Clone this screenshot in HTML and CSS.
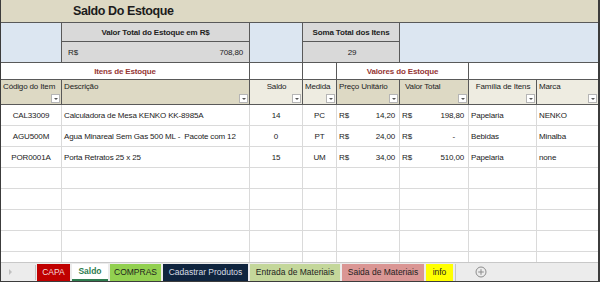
FILE: index.html
```html
<!DOCTYPE html>
<html lang="pt">
<head>
    <meta charset="UTF-8">
    <title>Saldo Do Estoque</title>
    <link rel="stylesheet" href="styles.css">
</head>
<body>
<div class="window">
    <!-- Planilha -->
    <div class="sheet">
        <table class="grid">
            <colgroup>
                <col class="c-cod"><col class="c-desc"><col class="c-saldo"><col class="c-med">
                <col class="c-preco"><col class="c-valor"><col class="c-fam"><col class="c-marca">
            </colgroup>
            <tr>
                <td colspan="8" class="title">Saldo Do Estoque</td>
            </tr>
            <tr>
                <td rowspan="2" class="blue"></td>
                <td class="sum-head">Valor Total do Estoque em R$</td>
                <td rowspan="2" class="blue"></td>
                <td colspan="2" class="sum-head">Soma Total dos Itens</td>
                <td colspan="3" rowspan="2" class="blue last"></td>
            </tr>
            <tr>
                <td class="sum-val"><div class="money"><span>R$</span><span>708,80</span></div></td>
                <td colspan="2" class="sum-val center">29</td>
            </tr>
            <tr>
                <td colspan="2" class="group">Itens de Estoque</td>
                <td class="group"></td>
                <td class="group"></td>
                <td colspan="2" class="group">Valores do Estoque</td>
                <td colspan="2" class="group last"></td>
            </tr>
            <tr>
                <td class="head tan"><div class="hd">Código do Item<i class="filter"></i></div></td>
                <td class="head tan"><div class="hd">Descrição<i class="filter"></i></div></td>
                <td class="head light"><div class="hd center">Saldo<i class="filter"></i></div></td>
                <td class="head light"><div class="hd">Medida<i class="filter"></i></div></td>
                <td class="head tan"><div class="hd">Preço Unitário<i class="filter"></i></div></td>
                <td class="head tan"><div class="hd pad">Valor Total<i class="filter"></i></div></td>
                <td class="head light"><div class="hd center">Família de Itens<i class="filter"></i></div></td>
                <td class="head light last"><div class="hd">Marca<i class="filter"></i></div></td>
            </tr>
            <tr>
                <td class="center">CAL33009</td>
                <td>Calculadora de Mesa KENKO KK-8985A</td>
                <td class="center">14</td>
                <td class="center">PC</td>
                <td><div class="money"><span>R$</span><span>14,20</span></div></td>
                <td><div class="money"><span>R$</span><span>198,80</span></div></td>
                <td>Papelaria</td>
                <td class="last">NENKO</td>
            </tr>
            <tr>
                <td class="center">AGU500M</td>
                <td>Agua Minareal Sem Gas 500 ML -&nbsp; Pacote com 12</td>
                <td class="center">0</td>
                <td class="center">PT</td>
                <td><div class="money"><span>R$</span><span>24,00</span></div></td>
                <td><div class="money"><span>R$</span><span class="dash">-</span></div></td>
                <td>Bebidas</td>
                <td class="last">Minalba</td>
            </tr>
            <tr>
                <td class="center">POR0001A</td>
                <td>Porta Retratos 25 x 25</td>
                <td class="center">15</td>
                <td class="center">UM</td>
                <td><div class="money"><span>R$</span><span>34,00</span></div></td>
                <td><div class="money"><span>R$</span><span>510,00</span></div></td>
                <td>Papelaria</td>
                <td class="last">none</td>
            </tr>
            <tr><td></td><td></td><td></td><td></td><td></td><td></td><td></td><td class="last"></td></tr>
            <tr><td></td><td></td><td></td><td></td><td></td><td></td><td></td><td class="last"></td></tr>
            <tr><td></td><td></td><td></td><td></td><td></td><td></td><td></td><td class="last"></td></tr>
            <tr><td></td><td></td><td></td><td></td><td></td><td></td><td></td><td class="last"></td></tr>
            <tr><td></td><td></td><td></td><td></td><td></td><td></td><td></td><td class="last"></td></tr>
        </table>
    </div>

    <!-- Abas das planilhas -->
    <div class="tabs">
        <div class="nav"><span class="arrow"></span></div>
        <div class="tab-list">
            <span class="tab capa">CAPA</span>
            <span class="tab saldo">Saldo</span>
            <span class="tab compras">COMPRAS</span>
            <span class="tab cadastrar">Cadastrar Produtos</span>
            <span class="tab entrada">Entrada de Materiais</span>
            <span class="tab saida">Saida de Materiais</span>
            <span class="tab info">info</span>
        </div>
        <div class="add">
            <svg width="12" height="12" viewBox="0 0 12 12">
                <circle cx="6" cy="6" r="5" fill="none" stroke="#8c8c8c" stroke-width="1"/>
                <path d="M6 3.2v5.6M3.2 6h5.6" stroke="#8c8c8c" stroke-width="1"/>
            </svg>
        </div>
    </div>
</div>
</body>
</html>
```

FILE: styles.css
```css
/* General Styles */
body {
    margin: 0;
    font-family: "Liberation Sans", Arial, sans-serif;
    color: #222;
    background: #fff;
}

.window {
    width: 600px;
    height: 282px;
    box-sizing: border-box;
    border-left: 1px solid #3c3c3c;
    border-right: 2px solid #3c3c3c;
    border-bottom: 1px solid #3c3c3c;
    display: flex;
    flex-direction: column;
    overflow: hidden;
}

.sheet {
    height: 262px;
    flex-shrink: 0;
    overflow: hidden;
}

/* Grid */
.grid {
    border-collapse: separate;
    border-spacing: 0;
    table-layout: fixed;
    width: 597px;
    font-size: 8px;
    letter-spacing: -0.15px;
}

.c-cod { width: 61px; }
.c-desc { width: 188px; }
.c-saldo { width: 53px; }
.c-med { width: 34px; }
.c-preco { width: 63px; }
.c-valor { width: 69px; }
.c-fam { width: 68px; }
.c-marca { width: 61px; }

.grid td {
    box-sizing: border-box;
    height: 21px;
    padding: 0 2px;
    border-right: 1px solid #dadada;
    border-bottom: 1px solid #dadada;
    white-space: nowrap;
    overflow: hidden;
    vertical-align: middle;
}

.grid td.last {
    border-right: none;
}

.grid td.center,
.center {
    text-align: center;
}

.grid td.title {
    height: 23px;
    padding-left: 72px;
    background: #ddd9c4;
    border-right: none;
    border-bottom: 1px solid #595959;
    font-size: 12.5px;
    letter-spacing: -0.4px;
    font-weight: bold;
    color: #1c1c1c;
}

.grid td.blue {
    background: #dce6f1;
    border-right: 1px solid #595959;
    border-bottom: 1px solid #595959;
}

.grid td.blue.last {
    border-right: none;
}

.grid td.sum-head {
    height: 19px;
    background: #d9d9d9;
    border-right: 1px solid #595959;
    border-bottom: 1px solid #595959;
    text-align: center;
    font-weight: bold;
}

.grid td.sum-val {
    height: 21px;
    background: #d9d9d9;
    border-right: 1px solid #595959;
    border-bottom: 1px solid #595959;
    padding: 0 4px 0 6px;
}

.grid td.group {
    height: 17px;
    border-right: 1px solid #595959;
    border-bottom: 1px solid #595959;
    text-align: center;
    font-weight: bold;
    color: #963634;
}

.grid td.group.last {
    border-right: none;
}

.grid td.head {
    height: 25px;
    padding: 0 1px 0 2px;
    border-right: 1px solid #595959;
    border-bottom: 1px solid #595959;
    vertical-align: top;
}

.grid td.head.last {
    border-right: none;
}

.tan {
    background: #ddd9c4;
}

.light {
    background: #eeece1;
}

.hd {
    height: 24px;
    display: flex;
    flex-direction: column;
    justify-content: space-between;
    padding-top: 2px;
    box-sizing: border-box;
}

.hd.pad {
    padding-left: 3px;
}

.filter {
    align-self: flex-end;
    width: 9px;
    height: 9px;
    margin-bottom: 1px;
    box-sizing: border-box;
    background: #fff;
    border: 1px solid #b5b5b5;
    display: flex;
    align-items: center;
    justify-content: center;
}

.filter::after {
    content: "";
    border-left: 2px solid transparent;
    border-right: 2px solid transparent;
    border-top: 2px solid #555;
}

.money {
    display: flex;
    justify-content: space-between;
    padding-right: 2px;
}

.dash {
    padding-right: 9px;
}

/* Sheet tabs */
.tabs {
    flex: 1;
    display: flex;
    align-items: center;
    background: #ececec;
    border-top: 1px solid #c8c8c8;
    font-size: 8.5px;
}

.nav {
    width: 35px;
    height: 15px;
    border-right: 1px solid #c4c4c4;
    display: flex;
    align-items: center;
    padding-left: 8px;
    box-sizing: border-box;
}

.arrow {
    border-top: 3px solid transparent;
    border-bottom: 3px solid transparent;
    border-left: 3px solid #c0c0c0;
}

.tab-list {
    display: flex;
    gap: 2px;
    padding: 0 2px 0 1px;
    height: 17px;
    border-right: 1px solid #c4c4c4;
}

.tab {
    height: 17px;
    display: flex;
    align-items: center;
    justify-content: center;
    box-sizing: border-box;
    white-space: nowrap;
    color: #1e1e1e;
}

.capa { width: 33px; background: #c00000; color: #f4dcdc; }
.saldo { width: 36px; background: #fff; color: #2e7d4f; font-weight: bold; border-bottom: 2px solid #2e7d4f; }
.compras { width: 51px; background: #92d050; }
.cadastrar { width: 85px; background: #0f243e; color: #d8dde4; }
.entrada { width: 90px; background: #c4d79b; }
.saida { width: 82px; background: #da9694; }
.info { width: 27px; background: #ffff00; }

.add {
    margin-left: 19px;
    display: flex;
    align-items: center;
}
```
